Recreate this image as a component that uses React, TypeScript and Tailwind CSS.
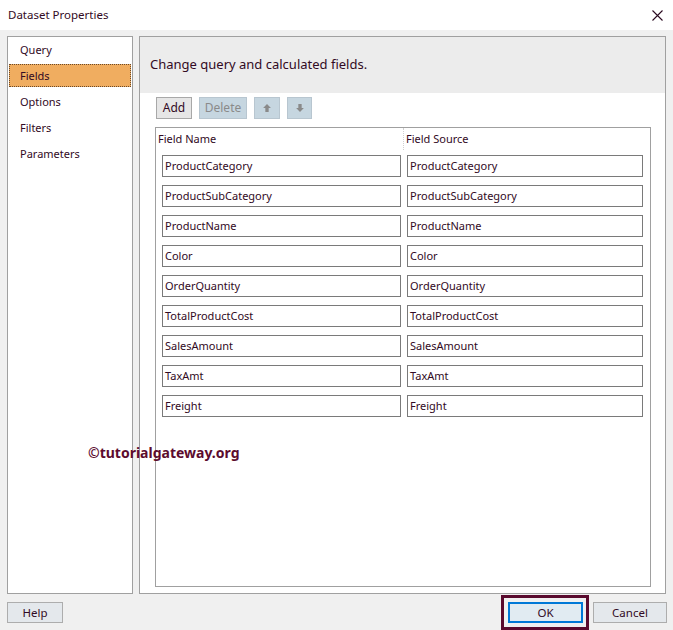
import React from "react";

const fields = [
  "ProductCategory",
  "ProductSubCategory",
  "ProductName",
  "Color",
  "OrderQuantity",
  "TotalProductCost",
  "SalesAmount",
  "TaxAmt",
  "Freight",
];

const navItems = ["Query", "Fields", "Options", "Filters", "Parameters"];

const ArrowIcon: React.FC<{ dir: "up" | "down" }> = ({ dir }) => (
  <svg width="10" height="10" viewBox="0 0 9 9">
    {dir === "up" ? (
      <path d="M4.5 1 L8 4.5 H6 V8 H3 V4.5 H1 Z" fill="#8a8a8a" />
    ) : (
      <path d="M4.5 8 L8 4.5 H6 V1 H3 V4.5 H1 Z" fill="#8a8a8a" />
    )}
  </svg>
);

const App: React.FC = () => {
  return (
    <div
      className="relative w-[673px] h-[630px] bg-[#f0f0f0] flex flex-col text-[11px] text-[#320a24] overflow-hidden"
      style={{ fontFamily: '"Noto Sans", "Open Sans", sans-serif' }}
    >
      {/* title bar */}
      <div className="h-[30px] bg-white flex items-center justify-between pl-[8px] pr-[10px]">
        <span className="text-[11.5px] text-[#320a24]">Dataset Properties</span>
        <svg width="11" height="11" viewBox="0 0 11 11">
          <path d="M0.5 0.5 L10.5 10.5 M10.5 0.5 L0.5 10.5" stroke="#2a0a20" strokeWidth="1.1" />
        </svg>
      </div>

      <div className="flex gap-[6px] px-[7px] pt-[6px] h-[564px]">
        {/* left nav */}
        <div className="w-[126px] bg-white border border-[#a0a0a0] pt-[1px] flex flex-col gap-[3px]">
          {navItems.map((item) => (
            <div
              key={item}
              className={
                item === "Fields"
                  ? "mx-[1px] h-[23px] flex items-center pt-[2px] pl-[10px] bg-[#f0ad60] border border-dotted border-[#6b4a2a]"
                  : "mx-[1px] h-[23px] flex items-center pt-[2px] pl-[11px]"
              }
            >
              {item}
            </div>
          ))}
        </div>

        {/* right panel */}
        <div className="flex-1 bg-white border border-[#a0a0a0] flex flex-col">
          <div className="h-[56px] bg-[#ececec] flex items-center pl-[10px] text-[13px] text-[#320a24]">
            Change query and calculated fields.
          </div>

          <div className="flex gap-[7px] pl-[16px] pt-[4px]">
            <button className="w-[36px] h-[22px] bg-[#e6e6e6] border border-[#a8a8a8] text-[12px] text-[#320a24]">
              Add
            </button>
            <button className="w-[48px] h-[22px] bg-[#c6d6e0] border border-[#b8c6d0] text-[12px] text-[#8a8a8a]">
              Delete
            </button>
            <button className="w-[26px] h-[22px] bg-[#c6d6e0] border border-[#b8c6d0] flex items-center justify-center">
              <ArrowIcon dir="up" />
            </button>
            <button className="w-[25px] h-[22px] bg-[#c6d6e0] border border-[#b8c6d0] flex items-center justify-center">
              <ArrowIcon dir="down" />
            </button>
          </div>

          <div className="flex-1 mt-[8px] ml-[15px] mr-[14px] mb-[6px] border border-[#a0a0a0] flex flex-col">
            <div className="flex h-[22px] items-center">
              <div className="w-[247px] pl-[2px]">Field Name</div>
              <div className="h-full flex items-center pl-[2px] border-l border-dotted border-[#d0d0d0]">
                Field Source
              </div>
            </div>
            <div className="flex flex-col gap-[8px] mt-[5px] pl-[6px]">
              {fields.map((f) => (
                <div key={f} className="flex gap-[6px]">
                  <div className="w-[239px] h-[22px] border border-[#7a7a7a] flex items-center pl-[2px]">
                    {f}
                  </div>
                  <div className="w-[236px] h-[22px] border border-[#7a7a7a] flex items-center pl-[2px]">
                    {f}
                  </div>
                </div>
              ))}
            </div>
          </div>
        </div>
      </div>

      {/* bottom buttons */}
      <div className="flex items-start pt-[8px] pl-[7px] pr-[6px]">
        <button className="w-[56px] h-[21px] bg-[#e4e8ec] border border-[#adadad] text-[11.5px] text-[#320a24]">
          Help
        </button>
        <div className="flex-1" />
        <button className="w-[75px] h-[21px] bg-[#e1ebf2] border-2 border-[#0078d7] text-[11.5px] text-[#320a24]">
          OK
        </button>
        <button className="ml-[10px] w-[74px] h-[21px] bg-[#e4e8ec] border border-[#adadad] text-[11.5px] text-[#320a24]">
          Cancel
        </button>
      </div>

      {/* annotation around OK */}
      <div className="absolute left-[501px] top-[595px] w-[88px] h-[35px] border-[3px] border-[#5a0a2e]" />

      {/* watermark */}
      <div className="absolute left-[88px] top-[442px] text-[14px] font-bold text-[#5c0b2e]">
        ©tutorialgateway.org
      </div>
    </div>
  );
};

export default App;
